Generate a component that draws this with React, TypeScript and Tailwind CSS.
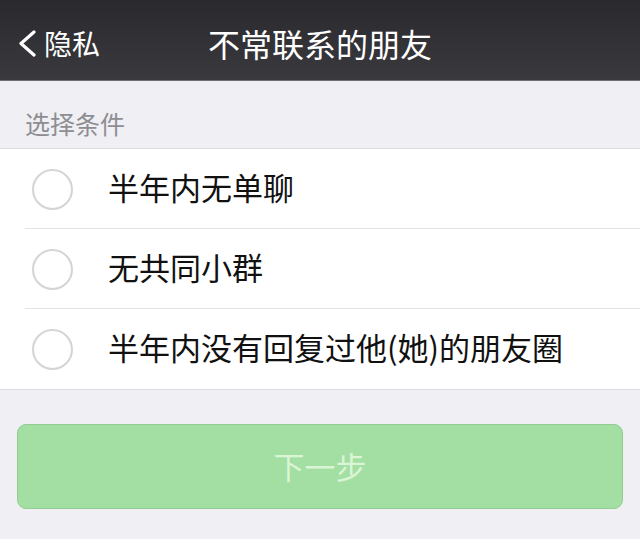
const OPTIONS = ['半年内无单聊', '无共同小群', '半年内没有回复过他(她)的朋友圈'];

function Radio() {
    return <div className="w-[41px] h-[41px] rounded-full border-2 border-[#d4d4d4] shrink-0" />;
}

export default function App() {
    return (
        <div
            className="w-[640px] h-[539px] bg-[#efeff4] overflow-hidden"
            style={{ fontFamily: '"Noto Sans CJK SC", "Noto Sans", sans-serif' }}
        >
            {/* Nav bar */}
            <div className="h-[81px] pt-[6px] bg-gradient-to-b from-[#2a292e] to-[#3a393e] border-b border-[#6e6d72] grid grid-cols-[1fr_auto_1fr] items-center">
                <div className="flex items-center pl-[18px] text-white">
                    <svg className="w-[19px] h-[27px]" viewBox="0 0 19 27" fill="none" stroke="currentColor" strokeWidth={3.2} strokeLinecap="round" strokeLinejoin="round">
                        <path d="M16 2 L3 13.5 L16 25" />
                    </svg>
                    <span className="ml-[7px] text-[28px] leading-none">隐私</span>
                </div>
                <div className="text-white text-[32px] leading-none">不常联系的朋友</div>
                <div />
            </div>

            {/* Section label */}
            <div className="h-[67px] flex items-end pl-[25px] pb-[12px] text-[25px] leading-none text-[#8d8d92]">
                选择条件
            </div>

            {/* Options */}
            <div className="bg-white border-y border-[#dcdce0]">
                {OPTIONS.map((label, i) => (
                    <div key={label} className="h-[80px] flex items-center pl-[32px] relative">
                        <Radio />
                        <span className="ml-[35px] mb-[5px] text-[31px] leading-none text-[#111111]">{label}</span>
                        {i < OPTIONS.length - 1 && (
                            <div className="absolute left-[25px] right-0 bottom-0 h-px bg-[#e3e3e6]" />
                        )}
                    </div>
                ))}
            </div>

            {/* Next button */}
            <div className="px-[17px] pt-[34px]">
                <button
                    type="button"
                    className="w-full h-[85px] pb-[3px] rounded-[9px] bg-[#a3dea3] border border-[#93cc93] text-[#d9f5d5] text-[31px] leading-none"
                >
                    下一步
                </button>
            </div>
        </div>
    );
}
